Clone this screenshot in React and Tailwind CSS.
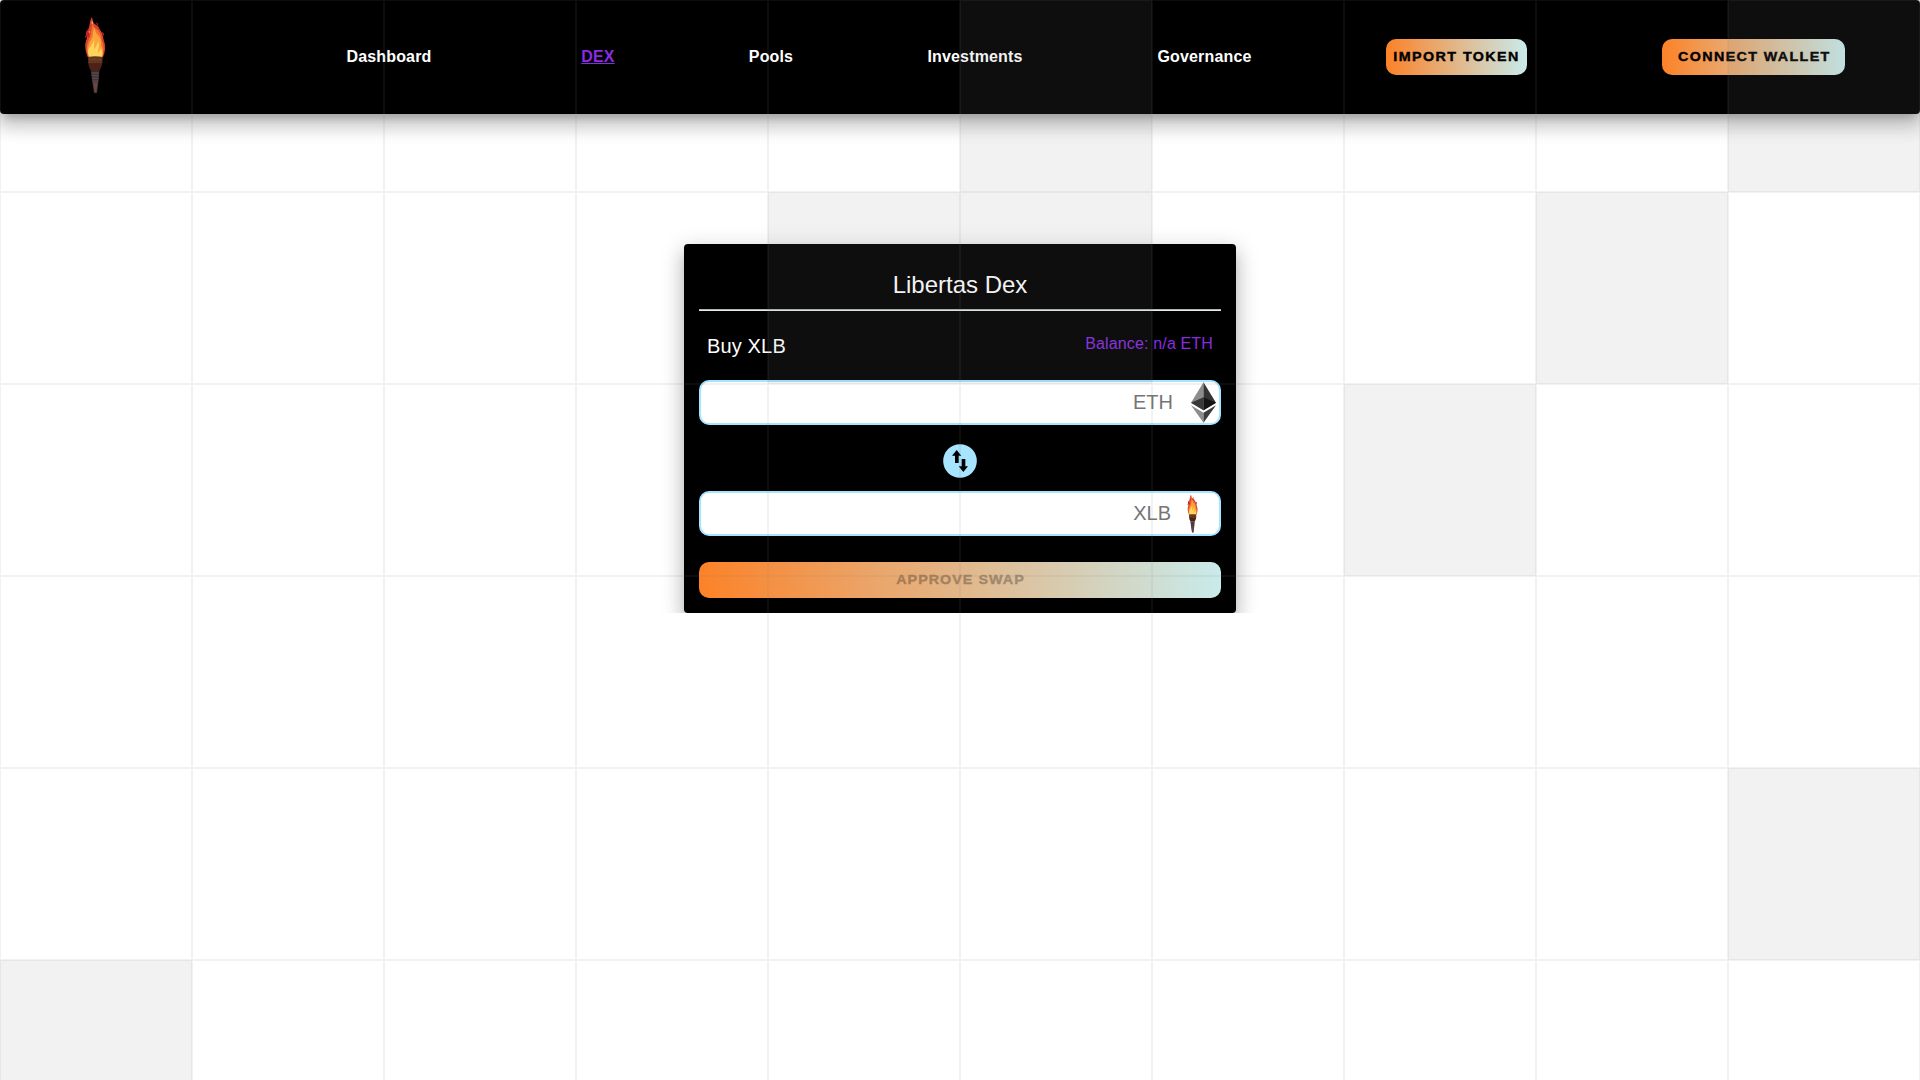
const HIGHLIGHTED = new Set([5, 9, 14, 15, 18, 27, 49, 50]);

function GridOverlay() {
  return (
    <div className="pointer-events-none absolute inset-0 z-20 grid auto-rows-[192px] grid-cols-10 overflow-hidden">
      {Array.from({ length: 60 }, (_, i) => (
        <div
          key={i}
          className={
            HIGHLIGHTED.has(i)
              ? "border border-[#8080801a] bg-[#8080801b]"
              : "border border-[#8080801a]"
          }
        />
      ))}
    </div>
  );
}

function Torch({ className }) {
  return (
    <svg viewBox="0 0 150 270" className={className} aria-hidden="true">
      <path d="M66 22 C58 32 61 45 55 57 C50 66 46 72 51 84 C42 104 46 122 53 141 L99 141 C106 124 108 108 101 90 C99 76 97 68 88 56 C86 44 71 46 69 33 Z" fill="#d8432c" />
      <path d="M52 60 C47 64 46 72 50 79 C57 87 60 78 58 70 C57 66 55 63 57 58 Z M79 37 L85 42 L83 46 L80 43 Z M96 65 L102 71 L100 79 L97 75 Z M47 76 L44 84 L49 81 Z" fill="#c32222" />
      <path d="M69 42 C62 58 65 72 58 86 C49 104 48 122 56 141 L97 141 C102 122 103 108 95 91 C95 76 88 64 80 58 C74 56 72 52 69 42 Z" fill="#f4742d" />
      <path d="M74 52 C66 66 72 78 63 90 C52 108 51 128 58 141 L96 141 C101 126 98 114 93 107 C95 92 91 83 84 76 C78 70 75 64 74 52 Z" fill="#fba53c" />
      <path d="M71 84 C75 97 60 107 55 120 C53 130 56 137 59 141 L94 141 C99 132 96 122 93 116 C89 122 86 125 84 128 C82 120 92 110 84 94 C82 106 76 110 74 118 C69 108 77 97 71 84 Z" fill="#ffd45c" />
      <path d="M65 34 L68 34 L69 43 L65 43 Z" fill="#ff9d8f" />
      <path d="M56 62 L61 65 L59 70 L56 67 Z" fill="#ff8a74" />
      <path d="M54 141 Q76 137 98 141 L97 160 L55 160 Z" fill="#63371f" />
      <path d="M55 157 L97 157 L95 169 Q90 178 88 184 L63 184 Q61 178 56 168 Z" fill="#4e2118" />
      <path d="M58 148 H94 M56 158 H97" stroke="#7b4d2b" strokeWidth="2.5" strokeDasharray="5 3" />
      <path d="M63 184 L88 184 L86 210 L81 249 L72 249 L66 210 Z" fill="#453435" />
      <path d="M64 189 H87 M65 197 H86 M66 205 H85 M67 213 H84" stroke="#57505a" strokeWidth="3" />
      <path d="M69 217 L83 217 L79 247 L74 247 Z" fill="#694640" />
    </svg>
  );
}

function EthLogo({ className }) {
  return (
    <svg viewBox="0 0 256 417" className={className} aria-hidden="true">
      <path fill="#343434" d="M127.96 0 125.17 9.5v275.67l2.79 2.79 127.96-75.64z" />
      <path fill="#8C8C8C" d="M127.96 0 0 212.32l127.96 75.64V154.16z" />
      <path fill="#3C3C3B" d="m127.96 312.19-1.57 1.92v98.2l1.57 4.6L256 236.59z" />
      <path fill="#8C8C8C" d="M127.96 416.9V312.19L0 236.59z" />
      <path fill="#141414" d="m127.96 287.96 127.96-75.64-127.96-58.16z" />
      <path fill="#393939" d="m0 212.32 127.96 75.64v-133.8z" />
    </svg>
  );
}

function SwapIcon() {
  return (
    <svg viewBox="0 0 102 102" className="h-[34px] w-[34px]" aria-hidden="true">
      <circle cx="51" cy="51" r="50.5" fill="#a6e4ff" />
      <path d="M41 18 L55 35 H47 V57 H36 V35 H27 Z" fill="#000" />
      <path d="M61 84 L47 67 H56 V45 H67 V67 H75 Z" fill="#000" />
    </svg>
  );
}

function GradientButton({ className, textClass, children }) {
  return (
    <button
      className={`flex h-9 items-center justify-center rounded-[10px] bg-[linear-gradient(90deg,#fc8228,#c8ebeb)] text-[13px] leading-6 font-bold whitespace-nowrap ${className}`}
    >
      <span className={`inline-block ${textClass}`}>{children}</span>
    </button>
  );
}

function TokenInput({ symbol, symbolClass, className, children }) {
  return (
    <div
      className={`flex h-[45px] items-center rounded-[10px] border-2 border-[#a6e4ff] bg-white ${className}`}
    >
      <input
        className={`min-w-0 flex-1 bg-transparent pb-[2px] text-right text-[20px] text-black outline-none placeholder:text-[#757575] ${symbolClass}`}
        placeholder={symbol}
      />
      {children}
    </div>
  );
}

function Header() {
  return (
    <header className="relative z-10 flex h-[114px] items-center rounded bg-black font-bold text-white shadow-[0_7px_8px_-4px_rgba(0,0,0,0.2),0_12px_17px_2px_rgba(0,0,0,0.14),0_5px_22px_4px_rgba(0,0,0,0.12)]">
      <a className="flex w-[190px] justify-center pb-[4px]">
        <Torch className="h-[90px] w-[50px]" />
      </a>
      <nav className="ml-[99px] flex text-center text-base tracking-[0.15px]">
        <a className="w-[200px]">Dashboard</a>
        <a className="w-[218px] text-[#8a2be2] underline">DEX</a>
        <a className="w-[128px]">Pools</a>
        <a className="w-[280px]">Investments</a>
        <a className="w-[179px]">Governance</a>
      </nav>
      <GradientButton className="ml-[92px] w-[141px] text-black" textClass="pl-px scale-x-[1.1] tracking-[1.3px] [-webkit-text-stroke:0.4px_#000]">
        IMPORT TOKEN
      </GradientButton>
      <GradientButton className="ml-[135px] w-[183px] text-black" textClass="pl-px scale-x-[1.1] tracking-[1.24px] [-webkit-text-stroke:0.4px_#000]">
        CONNECT WALLET
      </GradientButton>
    </header>
  );
}

function SwapCard() {
  return (
    <section className="mx-auto flex w-[552px] flex-col rounded bg-black px-[15px] pt-[25px] pb-[15px] text-white shadow-[0_7px_8px_-4px_rgba(0,0,0,0.2),0_12px_17px_2px_rgba(0,0,0,0.14),0_5px_22px_4px_rgba(0,0,0,0.12)]">
      <h1 className="pb-2 text-center text-[24px] leading-8">Libertas Dex</h1>
      <div className="h-[2px] border-t border-[#a9b4b4] bg-[#e6eded]" />
      <div className="mt-[19px] flex h-8 justify-between px-2">
        <h2 className="text-[20px] leading-8 tracking-[0.15px]">Buy XLB</h2>
        <p className="pt-[2px] text-base tracking-[0.15px] text-[#8a2be2]">Balance: n/a ETH</p>
      </div>
      <TokenInput symbol="ETH" className="mt-[18px] pr-[3px]" symbolClass="pr-[18px]">
        <EthLogo className="h-[41px] w-[25px]" />
      </TokenInput>
      <button className="mx-auto mt-[19px] h-[34px] w-[34px]">
        <SwapIcon />
      </button>
      <TokenInput symbol="XLB" className="mt-[13px] pr-[14px]" symbolClass="pr-[9px]">
        <Torch className="h-[45px] w-[25px]" />
      </TokenInput>
      <GradientButton className="mt-[26px] w-full" textClass="scale-x-[1.1] pl-px tracking-[0.95px] text-black opacity-[0.28] [-webkit-text-stroke:0.4px_#000]">
        APPROVE SWAP
      </GradientButton>
    </section>
  );
}

export default function App() {
  return (
    <div className="relative h-[1080px] w-full overflow-hidden bg-white font-['Liberation_Sans',Arial,sans-serif]">
      <Header />
      <main className="overflow-hidden pt-[130px]">
        <SwapCard />
      </main>
      <GridOverlay />
    </div>
  );
}
